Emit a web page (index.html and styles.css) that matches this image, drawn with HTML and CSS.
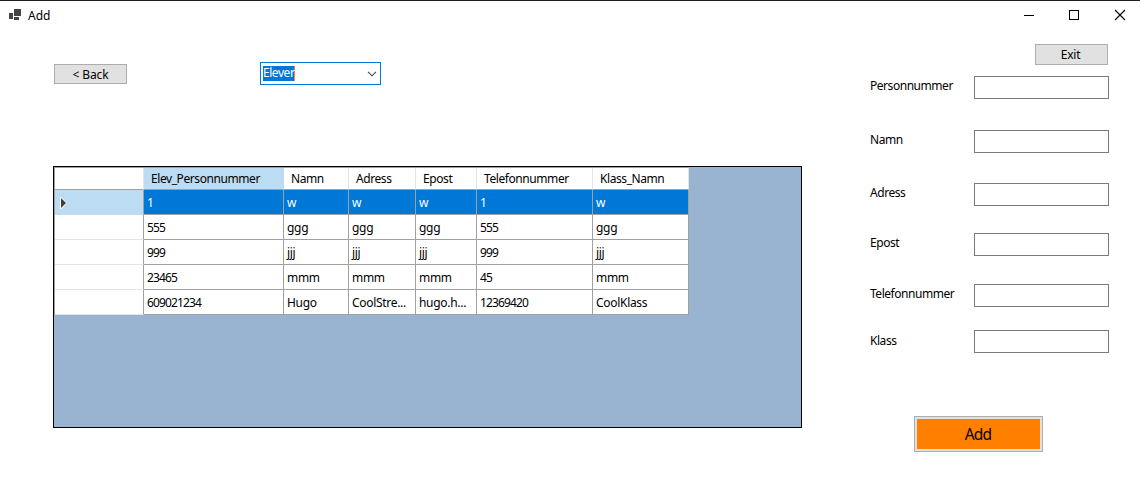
FILE: index.html
```html
<!DOCTYPE html>
<html lang="sv">
<head>
<meta charset="utf-8">
<title>Add</title>
<link rel="stylesheet" href="styles.css">
</head>
<body>
<div class="window">
  <header class="titlebar">
    <svg class="app-icon" width="13" height="12" viewBox="0 0 13 12" shape-rendering="crispEdges"><path d="M5 0h7v7H5zM0 4h4v6H0zM5 8h5v3H5z" fill="#424242"/></svg>
    <span class="title">Add</span>
    <div class="controls">
      <svg width="46" height="29" viewBox="0 0 46 29" shape-rendering="crispEdges"><path d="M18 14h10v1H18z"/></svg>
      <svg width="46" height="29" viewBox="0 0 46 29" shape-rendering="crispEdges"><path d="M17.500 9.500h9v9h-9z" fill="none" stroke="#000"/></svg>
      <svg width="46" height="29" viewBox="0 0 46 29"><path d="M17 9l10 10M27 9L17 19" fill="none" stroke="#000" stroke-width="1.1"/></svg>
    </div>
  </header>
  <div class="client">
    <main class="left">
      <div class="toolbar">
        <button class="btn back">&lt; Back</button>
        <div class="combo"><span class="selected">Elever</span><svg width="10" height="6" viewBox="0 0 10 6"><path d="M1 .8l4 4 4-4" fill="none" stroke="#444" stroke-width="1.1"/></svg></div>
      </div>
      <div class="datagrid">
        <div class="table">
          <div class="row head"><span class="corner"></span><span class="active">Elev_Personnummer</span><span>Namn</span><span>Adress</span><span>Epost</span><span>Telefonnummer</span><span>Klass_Namn</span></div>
          <div class="row current"><span class="rowhead"><svg width="7" height="12" viewBox="0 0 7 12"><path d="M0 0h1l6 6-6 6H0z" fill="#fff"/><path d="M1 1l5 5-5 5z" fill="#404040"/></svg></span><span class="num">1</span><span>w</span><span>w</span><span>w</span><span class="num">1</span><span>w</span></div>
          <div class="row"><span class="rowhead"></span><span class="num">555</span><span>ggg</span><span>ggg</span><span>ggg</span><span class="num">555</span><span>ggg</span></div>
          <div class="row"><span class="rowhead"></span><span class="num">999</span><span>jjj</span><span>jjj</span><span>jjj</span><span class="num">999</span><span>jjj</span></div>
          <div class="row"><span class="rowhead"></span><span class="num">23465</span><span>mmm</span><span>mmm</span><span>mmm</span><span class="num">45</span><span>mmm</span></div>
          <div class="row"><span class="rowhead"></span><span class="num">609021234</span><span>Hugo</span><span>CoolStre...</span><span>hugo.h...</span><span class="num">12369420</span><span>CoolKlass</span></div>
        </div>
      </div>
    </main>
    <aside class="right">
      <button class="btn exit">Exit</button>
      <div class="form">
        <label>Personnummer</label><input>
        <label>Namn</label><input>
        <label>Adress</label><input>
        <label>Epost</label><input>
        <label>Telefonnummer</label><input>
        <label class="low">Klass</label><input>
      </div>
      <button class="btn add">Add</button>
    </aside>
  </div>
</div>
</body>
</html>
```
FILE: styles.css
```css
* { box-sizing: border-box; }
body { margin: 0; background: #fff; color: #000; font: 12px/16px "Noto Sans", "Open Sans", sans-serif; }
.window { width: 1140px; height: 485px; border-top: 1px solid #1f1f1f; overflow: hidden; }
.titlebar { display: flex; height: 29px; padding-left: 9px; }
.app-icon { margin-top: 8px; }
.title { margin: 7px 0 0 6px; }
.controls { display: flex; margin-left: auto; margin-right: -4px; }
.client { display: flex; }
.left { width: 870px; padding: 32px 0 0 53px; }
.toolbar { display: flex; align-items: flex-start; height: 104px; }
.btn { display: flex; align-items: center; justify-content: center; padding: 0; border: 1px solid #adadad; background: #e1e1e1; color: #000; font: inherit; }
.back { width: 73px; height: 20px; margin: 2px 0 0 1px; padding-top: 1px; letter-spacing: -.1px; }
.combo { display: flex; align-items: center; justify-content: space-between; width: 121px; height: 23px; margin-left: 133px; padding: 0 3px 0 2px; border: 1px solid #0078d7; }
.selected { height: 15px; margin-top: -1px; line-height: 14px; background: #0078d7; color: #fff; border-right: 1px solid #ff8728; letter-spacing: -.45px; }
.datagrid { width: 749px; height: 262px; border: 1px solid #000; background: #99b4d1; }
.table { width: 635px; border-left: 1px solid #a0a0a0; border-top: 1px solid #a0a0a0; background: #fff; }
.row { display: grid; grid-template-columns: 89px 140px 65px 67px 61px 116px 96px; height: 25px; }
.row > span { padding: 5px 0 0 3px; border-right: 1px solid #a0a0a0; border-bottom: 1px solid #a0a0a0; line-height: 16px; letter-spacing: -.3px; white-space: nowrap; overflow: hidden; }
.row > .num { letter-spacing: -.85px; }
.row.head { height: 22px; }
.head > span { padding: 3px 0 0 7px; border-right-color: #e5e5e5; letter-spacing: -.42px; }
.head > .active { background: #bcdcf4; border-right-color: #bcdcf4; }
.current { background: #0078d7; color: #fff; }
.row > .rowhead { background: #fff; border-bottom-color: #e5e5e5; }
.current > .rowhead { display: flex; align-items: center; padding: 1px 0 0 5px; background: #bcdcf4; border-bottom-color: #bcdcf4; }
.right { width: 270px; padding-top: 14px; }
.exit { width: 73px; height: 21px; margin-left: 165px; padding-right: 2px; letter-spacing: -.2px; }
.form { display: grid; grid-template-columns: 104px 135px; grid-template-rows: 54px 53px 50px 51px 46px 86px; align-items: start; margin-top: 11px; }
.form label { padding-top: 2px; letter-spacing: -.46px; }
.form .low { padding-top: 3px; }
.form input { width: 135px; height: 23px; padding: 2px 4px; border: 1px solid #7a7a7a; background: #fff; font: inherit; }
.add { width: 129px; height: 36px; margin-left: 44px; padding-right: 1px; background: #ff8000; box-shadow: inset 0 0 0 2px #e1e1e1; font-size: 15.5px; letter-spacing: -.8px; }
```
